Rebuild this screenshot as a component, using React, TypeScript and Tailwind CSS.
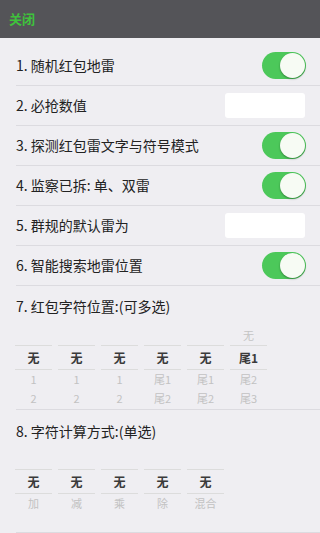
const font = { fontFamily: '"Noto Sans CJK SC", "Noto Sans", sans-serif' };

type Row = { label: string; kind: "toggle" | "input" };

const rows: Row[] = [
  { label: "1. 随机红包地雷", kind: "toggle" },
  { label: "2. 必抢数值", kind: "input" },
  { label: "3. 探测红包雷文字与符号模式", kind: "toggle" },
  { label: "4. 监察已拆: 单、双雷", kind: "toggle" },
  { label: "5. 群规的默认雷为", kind: "input" },
  { label: "6. 智能搜索地雷位置", kind: "toggle" },
];

function Toggle() {
  return (
    <div className="w-[44px] h-[27px] rounded-full bg-[#4cc85a] flex items-center justify-end pr-[1px]">
      <div className="w-[25px] h-[25px] rounded-full bg-[#f7fbf4] shadow-[0_1px_2px_rgba(0,0,0,0.35)]" />
    </div>
  );
}

function Column({ above, selected, below, rowH }: { above?: string; selected: string; below: string[]; rowH: string }) {
  return (
    <div className="w-[43px] flex flex-col items-stretch">
      <div className={`${rowH} flex items-center justify-center text-[11px] text-[#c4c4c4]`}>{above ?? ""}</div>
      <div className="mx-[3px] h-[25px] border-y border-[#dcdcdc] flex items-center justify-center text-[12px] font-bold text-[#3a3a3a]">
        {selected}
      </div>
      {below.map((b, i) => (
        <div key={i} className="h-[19px] flex items-center justify-center text-[11px] text-[#c2c2c2]">
          {b}
        </div>
      ))}
    </div>
  );
}

export default function App() {
  return (
    <div className="w-[320px] h-[533px] bg-[#efeef2] overflow-hidden" style={font}>
      {/* header */}
      <div className="h-[38px] bg-[#545458] flex items-center px-[9px]">
        <span className="text-[13px] font-bold text-[#3fc23c]">关闭</span>
      </div>

      <div className="pt-[8px] pl-[16px]">
        {rows.map((r) => (
          <div key={r.label} className="h-[40px] flex items-center justify-between pr-[14px] border-b border-[#dcdbe0]">
            <span className="text-[14px] text-[#222]">{r.label}</span>
            {r.kind === "toggle" ? (
              <Toggle />
            ) : (
              <div className="w-[80px] h-[25px] bg-white rounded-[3px] mr-[1px]" />
            )}
          </div>
        ))}

        <div className="h-[40px] flex items-center">
          <span className="text-[14px] text-[#222]">7. 红包字符位置:(可多选)</span>
        </div>
      </div>

      <div className="ml-[16px] border-b border-[#dcdbe0]">
        <div className="flex -ml-[4px] pb-[1px]">
          <Column rowH="h-[19px]" selected="无" below={["1", "2"]} />
          <Column rowH="h-[19px]" selected="无" below={["1", "2"]} />
          <Column rowH="h-[19px]" selected="无" below={["1", "2"]} />
          <Column rowH="h-[19px]" selected="无" below={["尾1", "尾2"]} />
          <Column rowH="h-[19px]" selected="无" below={["尾1", "尾2"]} />
          <Column rowH="h-[19px]" above="无" selected="尾1" below={["尾2", "尾3"]} />
        </div>
      </div>

      <div className="pl-[16px] h-[42px] flex items-center">
        <span className="text-[14px] text-[#222]">8. 字符计算方式:(单选)</span>
      </div>

      <div className="ml-[16px] border-b border-[#dcdbe0] h-[81px]">
        <div className="flex -ml-[4px] pt-[17px]">
          <Column rowH="h-0" selected="无" below={["加"]} />
          <Column rowH="h-0" selected="无" below={["减"]} />
          <Column rowH="h-0" selected="无" below={["乘"]} />
          <Column rowH="h-0" selected="无" below={["除"]} />
          <Column rowH="h-0" selected="无" below={["混合"]} />
        </div>
      </div>
    </div>
  );
}
